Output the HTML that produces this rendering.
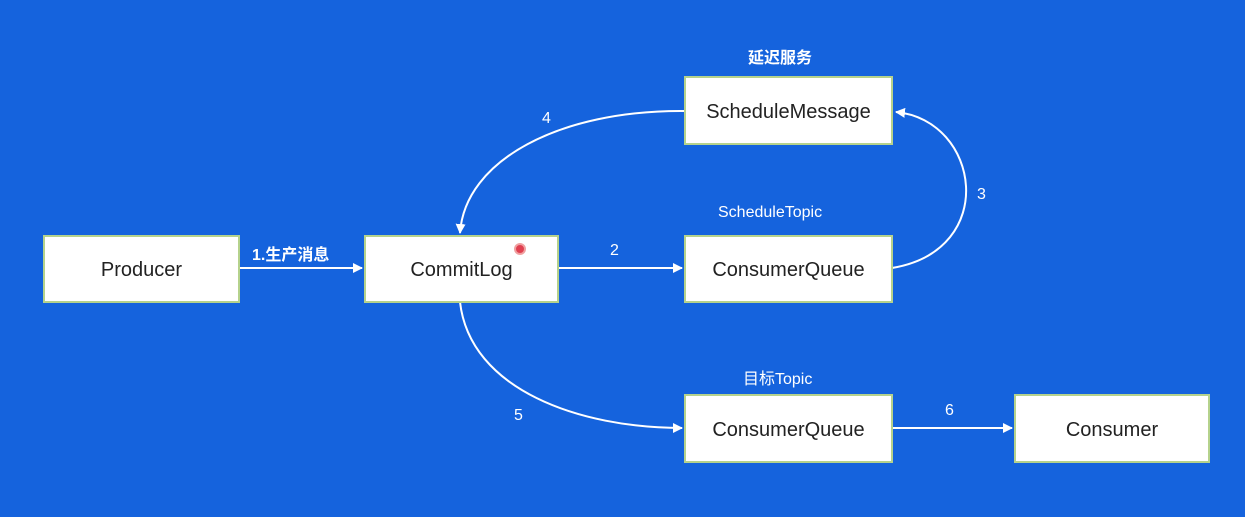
<!DOCTYPE html>
<html><head><meta charset="utf-8"><style>
body{margin:0;width:1245px;height:517px;background:#1563dd;overflow:hidden;position:relative;font-family:"Liberation Sans","Noto Sans CJK SC",sans-serif}
.b{position:absolute;background:#fff;border:2px solid #b5d28c;box-sizing:border-box;display:flex;align-items:center;justify-content:center;font-size:20px;color:#222;padding-top:3px}
.t{position:absolute;color:#fff;font-size:16px}
</style></head><body>
<svg width="1245" height="517" style="position:absolute;left:0;top:0">
<defs><marker id="a" markerWidth="10" markerHeight="10" refX="9" refY="5" orient="auto" markerUnits="userSpaceOnUse"><path d="M0,0 L10,5 L0,10 z" fill="#fff"/></marker></defs>
<g stroke="#fff" stroke-width="2" fill="none">
<line x1="239" y1="268" x2="362" y2="268" marker-end="url(#a)"/>
<line x1="558" y1="268" x2="682" y2="268" marker-end="url(#a)"/>
<line x1="892" y1="428" x2="1012" y2="428" marker-end="url(#a)"/>
<path d="M892,268 C1000,250 980,120 896,112" marker-end="url(#a)"/>
<path d="M684,111 C560,110 465,160 460,233" marker-end="url(#a)"/>
<path d="M460,302 C470,390 580,428 682,428" marker-end="url(#a)"/>
</g></svg>
<div class="b" style="left:43px;top:235px;width:197px;height:68px">Producer</div>
<div class="b" style="left:364px;top:235px;width:195px;height:68px">CommitLog</div>
<div style="position:absolute;left:514px;top:243px;width:8px;height:8px;border-radius:50%;background:#e04050;border:2px solid #f0a0a0"></div>
<div class="b" style="left:684px;top:235px;width:209px;height:68px">ConsumerQueue</div>
<div class="b" style="left:684px;top:76px;width:209px;height:69px">ScheduleMessage</div>
<div class="b" style="left:684px;top:394px;width:209px;height:69px">ConsumerQueue</div>
<div class="b" style="left:1014px;top:394px;width:196px;height:69px">Consumer</div>
<div class="t" style="left:748px;top:44px;font-weight:bold">延迟服务</div>
<div class="t" style="left:718px;top:204px">ScheduleTopic</div>
<div class="t" style="left:743px;top:365px">目标Topic</div>
<div class="t" style="left:252px;top:241px;font-weight:bold">1.生产消息</div>
<div class="t" style="left:610px;top:242px">2</div>
<div class="t" style="left:977px;top:186px">3</div>
<div class="t" style="left:542px;top:110px">4</div>
<div class="t" style="left:514px;top:407px">5</div>
<div class="t" style="left:945px;top:402px">6</div>
</body></html>
